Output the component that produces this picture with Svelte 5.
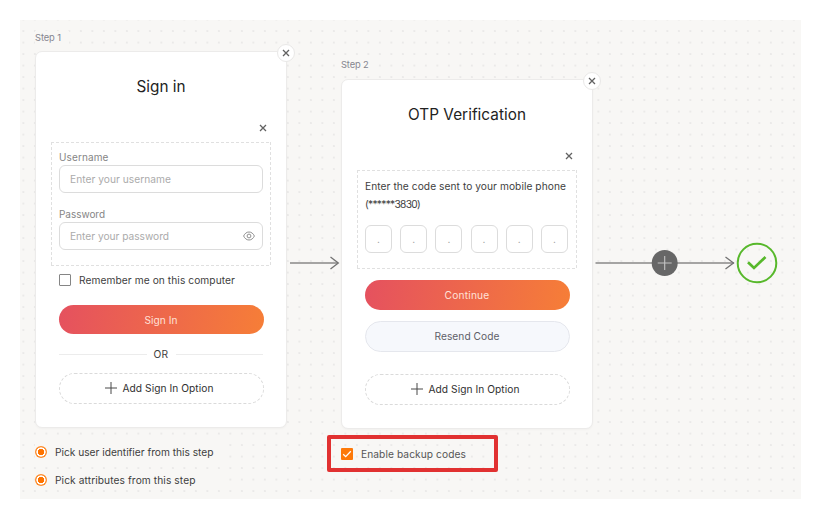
<script>
  // Tracks a label out (or in) so that it fills the given measure.
  function fit(node, width) {
    const natural = node.getBoundingClientRect().width;
    node.style.letterSpacing = `${(width - natural) / node.textContent.length}px`;
  }
  const digits = [0, 1, 2, 3, 4, 5];
</script>

{#snippet cross(size)}
  <svg class="cross" width={size} height={size} viewBox="0 0 8 8"><path d="M1 1l6 6M7 1l-6 6" /></svg>
{/snippet}

{#snippet addOption()}
  <button class="add">
    <svg width="12" height="12" viewBox="0 0 12 12"><path d="M6 0v12M0 6h12" /></svg>
    <span use:fit={91}>Add Sign In Option</span>
  </button>
{/snippet}

<main class="canvas">
  <section class="step first">
    <div class="step-label"><span use:fit={26}>Step 1</span></div>
    <div class="card">
      <button class="close" aria-label="Remove step">{@render cross(8)}</button>
      <h2><span use:fit={49}>Sign in</span></h2>
      <div class="remove">{@render cross(8)}</div>
      <div class="group credentials">
        <div class="field-label"><span use:fit={49.5}>Username</span></div>
        <div class="input"><span use:fit={101}>Enter your username</span></div>
        <div class="field-label second"><span use:fit={46}>Password</span></div>
        <div class="input">
          <span use:fit={99}>Enter your password</span>
          <svg class="eye" width="12" height="10" viewBox="0 0 12 10">
            <path d="M.6 5C1.8 2.5 3.6 1 6 1s4.200 1.500 5.400 4C10.200 7.500 8.400 9 6 9S1.800 7.500.6 5z" />
            <circle cx="6" cy="5" r="1.900" />
          </svg>
        </div>
      </div>
      <div class="remember"><i class="box"></i><span use:fit={156}>Remember me on this computer</span></div>
      <button class="primary"><span use:fit={33}>Sign In</span></button>
      <div class="or"><i></i><span use:fit={15}>OR</span><i></i></div>
      {@render addOption()}
    </div>
    <div class="pick"><i class="radio"></i><span use:fit={158.5}>Pick user identifier from this step</span></div>
    <div class="pick"><i class="radio"></i><span use:fit={140.5}>Pick attributes from this step</span></div>
  </section>

  <svg class="arrow" width="54" height="20" viewBox="0 0 54 20">
    <path class="line" d="M3 10H51" />
    <path class="head" d="M43.500 4L51.300 10L43.500 16" />
  </svg>

  <section class="step otp">
    <div class="step-label"><span use:fit={27.5}>Step 2</span></div>
    <div class="card">
      <button class="close" aria-label="Remove step">{@render cross(8)}</button>
      <h2><span use:fit={118}>OTP Verification</span></h2>
      <div class="remove">{@render cross(8)}</div>
      <div class="group code">
        <p><span use:fit={201}>Enter the code sent to your mobile phone</span></p>
        <p><span use:fit={55}>(******3830)</span></p>
        <div class="digits">
          {#each digits as d (d)}<div class="digit">.</div>{/each}
        </div>
      </div>
      <button class="primary"><span use:fit={45}>Continue</span></button>
      <button class="secondary"><span use:fit={65}>Resend Code</span></button>
      {@render addOption()}
    </div>
    <div class="backup">
      <svg width="12" height="12" viewBox="0 0 12 12"><rect width="12" height="12" rx="1" /><path d="M2.200 6.200L4.700 8.600L9.800 3.300" /></svg>
      <span use:fit={105}>Enable backup codes</span>
    </div>
  </section>

  <svg class="finish" width="186" height="44" viewBox="0 0 186 44">
    <path class="line" d="M2.500 22H141" />
    <path class="head" d="M132.500 16L140.500 22L132.500 28" />
    <circle class="node" cx="71.700" cy="22" r="13" />
    <path class="plus" d="M71.700 15v14M64.700 22h14" />
    <circle class="done" cx="164" cy="22" r="19.300" />
    <path class="tick" d="M155 21.200L161 27L172.500 16" />
  </svg>
</main>

<style>
  :global(body) { background: #fff; }
  * { box-sizing: border-box; }
  .canvas {
    width: 781px;
    height: 479px;
    margin: 20px 0 0 20px;
    padding-left: 15px;
    display: flex;
    align-items: flex-start;
    background-color: #f8f7f5;
    background-image: radial-gradient(circle, #e9e8e7 0, #ebeae9 0.8px, transparent 1.300px);
    background-size: 11.500px 11.500px;
    background-position: -2.400px -6.200px;
    font-family: Inter, "Open Sans", sans-serif;
    font-size: 10.200px;
    color: #3e3e3e;
  }
  span { white-space: nowrap; flex: none; }
  .step { width: 252px; flex: none; }
  .first { padding-top: 11px; }
  .otp { padding-top: 39px; }
  .step-label {
    width: 34px;
    height: 13px;
    margin-bottom: 7px;
    line-height: 13px;
    background: #f8f7f5;
    font-size: 9.300px;
    color: #85858f;
  }
  .otp .step-label { height: 12px; margin-bottom: 8px; line-height: 11px; }
  .card {
    position: relative;
    height: 377px;
    padding: 0 23px;
    border: 1px solid #ecebea;
    border-radius: 7px;
    background: #fff;
    display: flex;
    flex-direction: column;
    box-shadow: 0 1px 2px #00000008;
  }
  .otp .card { height: 350px; }
  button { font: inherit; color: inherit; padding: 0; border: 0; background: none; }
  .close {
    position: absolute;
    right: -9px;
    top: -8px;
    width: 18px;
    height: 18px;
    border: 1px solid #e9e8e7;
    border-radius: 50%;
    background: #fff;
    display: grid;
    place-items: center;
  }
  .cross { display: block; fill: none; stroke: #626262; stroke-width: 1.300; }
  h2 {
    margin: 25px 0 0;
    height: 20px;
    display: flex;
    justify-content: center;
    font-size: 15.300px;
    line-height: 20px;
    font-weight: 400;
    color: #222;
  }
  .remove { height: 8px; width: 208px; margin-top: 27px; display: flex; justify-content: flex-end; }
  .group {
    flex: none;
    width: 220px;
    margin: 10px 0 0 -8px;
    padding: 0 8px;
    background:
      repeating-linear-gradient(90deg, #e0e0e0 0 3px, transparent 3px 5px) top / 100% 1px no-repeat,
      repeating-linear-gradient(90deg, #e0e0e0 0 3px, transparent 3px 5px) bottom / 100% 1px no-repeat,
      repeating-linear-gradient(#e0e0e0 0 3px, transparent 3px 5px) left / 1px 100% no-repeat,
      repeating-linear-gradient(#e0e0e0 0 3px, transparent 3px 5px) right / 1px 100% no-repeat;
  }
  .credentials { height: 124px; padding-top: 9px; }
  .field-label { height: 14px; line-height: 13px; font-size: 10px; color: #858585; }
  .field-label.second { margin-top: 15px; }
  .input {
    height: 28px;
    width: 204px;
    border: 1px solid #dcdcdc;
    border-radius: 6px;
    padding: 0 7px 0 10px;
    display: flex;
    align-items: center;
    justify-content: space-between;
    color: #ababab;
  }
  .eye { fill: none; stroke: #858585; stroke-width: 0.900; }
  .remember { height: 14px; margin-top: 7px; display: flex; align-items: center; gap: 8px; }
  .box { width: 12px; height: 12px; border: 1.500px solid #858585; border-radius: 1px; }
  .primary {
    flex: none;
    width: 205px;
    height: 29px;
    margin: 18px 0 0 -0.500px;
    border-radius: 15px;
    background: linear-gradient(100deg, #e5515f, #f67e37);
    color: #ffe1d8;
  }
  .or { height: 14px; margin-top: 13px; display: flex; align-items: center; gap: 7px; }
  .or i { height: 1px; flex: 1; background: #ececec; }
  .add {
    flex: none;
    width: 205px;
    height: 31px;
    margin-top: 12px;
    padding: 0 5px 1px 0;
    border: 1px dashed #dadada;
    border-radius: 16px;
    display: flex;
    align-items: center;
    justify-content: center;
    gap: 6px;
    color: #303030;
  }
  .add svg { stroke: #484848; stroke-width: 1; }
  .pick { width: 185px; height: 18px; margin-top: 10px; display: flex; align-items: center; gap: 8px; background: #f8f7f5; }
  .card + .pick { margin-top: 15px; }
  .radio {
    width: 12px;
    height: 12px;
    border-radius: 50%;
    background: radial-gradient(circle, #fe7300 2.900px, #fff 3.500px, #fff 4.300px, #fd8c2c 4.900px);
  }
  .code { height: 99px; padding-top: 8px; }
  p { margin: 0; height: 18px; line-height: 17px; }
  .digits { display: flex; gap: 8.200px; margin-top: 11px; }
  .digit {
    width: 27px;
    height: 28px;
    border: 1px solid #dcdcdc;
    border-radius: 6px;
    text-align: center;
    line-height: 26px;
    color: #999;
  }
  .otp .primary { margin-top: 11px; height: 30px; }
  .secondary {
    flex: none;
    width: 205px;
    height: 31px;
    margin: 11px 0 0 -0.500px;
    border: 1px solid #e5e7ed;
    border-radius: 16px;
    background: #f6f8fc;
    color: #5e5e68;
  }
  .otp .primary, .secondary { padding-bottom: 1px; }
  .secondary + .add { margin-top: 22px; }
  .backup {
    width: 171px;
    height: 37px;
    margin: 6px 0 0 -14.500px;
    padding-left: 10.500px;
    border: 4px solid #e13131;
    border-radius: 2px;
    display: flex;
    align-items: center;
    gap: 8px;
    color: #555;
  }
  .backup svg { fill: #fd7909; }
  .backup path { fill: none; stroke: #fff; stroke-width: 1.300; }
  .arrow { flex: none; margin-top: 233px; }
  .finish { flex: none; margin-top: 221px; }
  .line, .head { fill: none; stroke: #8a8987; stroke-width: 1.700; }
  .head { stroke: #727272; stroke-width: 1.300; }
  .node { fill: #676767; }
  .plus { stroke: #c4c4c4; stroke-width: 1.100; }
  .done { fill: none; stroke: #57b82b; stroke-width: 2; }
  .tick { fill: none; stroke: #57b82b; stroke-width: 2.700; }
</style>
